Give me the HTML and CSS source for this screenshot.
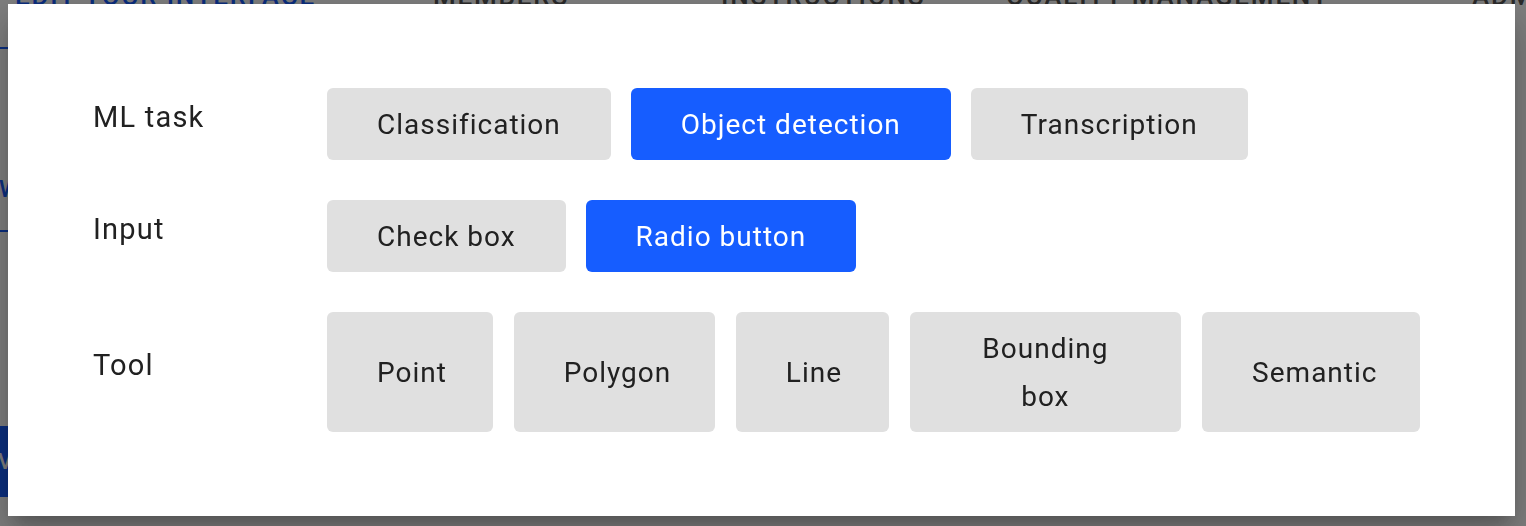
FILE: index.html
```html
<!DOCTYPE html>
<html lang="en">
<head>
<meta charset="utf-8">
<title>Edit your interface</title>
<link rel="stylesheet" href="styles.css">
</head>
<body>
<div class="page">
  <nav class="tabs">
    <div class="tab tab-edit active">EDIT YOUR INTERFACE</div>
    <div class="tab tab-members">MEMBERS</div>
    <div class="tab tab-instructions">INSTRUCTIONS</div>
    <div class="tab tab-quality">QUALITY MANAGEMENT</div>
    <div class="tab tab-admin">ADMIN</div>
  </nav>
  <div class="subtabs">
    <div class="subtab">WORKFLOW</div>
  </div>
  <div class="actions">
    <button class="page-btn">VIEW</button>
  </div>
</div>

<div class="backdrop"></div>

<div class="modal" role="dialog">
  <div class="form">
    <div class="label">ML task</div>
    <div class="options">
      <button class="opt">Classification</button>
      <button class="opt selected">Object detection</button>
      <button class="opt">Transcription</button>
    </div>

    <div class="label">Input</div>
    <div class="options">
      <button class="opt">Check box</button>
      <button class="opt selected">Radio button</button>
    </div>

    <div class="label">Tool</div>
    <div class="options tools">
      <button class="opt">Point</button>
      <button class="opt">Polygon</button>
      <button class="opt">Line</button>
      <button class="opt">Bounding box</button>
      <button class="opt">Semantic</button>
    </div>
  </div>
</div>
</body>
</html>
```
FILE: styles.css
```css
html, body {
  margin: 0;
  padding: 0;
  background: #ffffff;
  font-family: Roboto, "Liberation Sans", Arial, sans-serif;
  overflow: hidden;
}

/* ---------- background page (dimmed) ---------- */
.page {
  height: 526px;
  overflow: hidden;
}

.tabs {
  display: flex;
  margin-top: -28px;
  height: 77px;
  overflow: hidden;
}

.tab {
  flex: none;
  white-space: nowrap;
  box-sizing: border-box;
  font-size: 26px;
  font-weight: 500;
  letter-spacing: 1.8px;
  line-height: 48px;
  color: #555;
}

.tab-edit {
  padding-left: 15px;
  width: 433px;
}

.tab-members { width: 288px; }
.tab-instructions { width: 285px; }
.tab-quality { width: 466px; }
.tab-admin { width: 54px; overflow: hidden; }

.tab.active {
  color: #165dff;
  border-bottom: 2px solid #165dff;
}

.subtabs {
  display: flex;
  margin-top: 122px;
}

.subtab {
  font-size: 24px;
  font-weight: 500;
  color: #165dff;
  line-height: 36px;
  padding-bottom: 23px;
  border-bottom: 2px solid #165dff;
  margin-left: -1px;
  width: 200px;
}

.actions {
  margin-top: 194px;
}

.page-btn {
  border: none;
  border-radius: 0;
  background: #165dff;
  color: #ffffff;
  font-family: inherit;
  font-size: 22px;
  font-weight: 500;
  height: 71px;
  padding: 0 40px 0 0;
  margin-left: -2px;
}

.backdrop {
  position: fixed;
  inset: 0;
  background: rgba(0, 0, 0, 0.5);
}

/* ---------- modal ---------- */
.modal {
  position: fixed;
  left: 8px;
  right: 11px;
  top: 4px;
  background: #ffffff;
  padding: 84px 95px 84px 85px;
  box-shadow: 0 11px 15px -7px rgba(0, 0, 0, 0.2),
              0 24px 38px 3px rgba(0, 0, 0, 0.14),
              0 9px 46px 8px rgba(0, 0, 0, 0.12);
}

.form {
  display: grid;
  grid-template-columns: 234px minmax(0, 1fr);
  row-gap: 40px;
  align-items: center;
}

.label {
  font-size: 29px;
  letter-spacing: 1.2px;
  line-height: 48px;
  color: #212121;
  margin-bottom: 14px;
}

.options {
  display: flex;
  gap: 20px;
  min-width: 0;
}

.opt {
  border: none;
  border-radius: 6px;
  background: #e0e0e0;
  color: #212121;
  font-family: inherit;
  font-size: 28px;
  letter-spacing: 1px;
  line-height: 48px;
  padding: 13px 50px 11px;
  text-align: center;
  flex: 0 1 auto;
  cursor: pointer;
}

.tools {
  gap: 21px;
}

.tools .opt {
  min-width: 0;
}

.opt.selected {
  background: #165dff;
  color: #ffffff;
}
```
